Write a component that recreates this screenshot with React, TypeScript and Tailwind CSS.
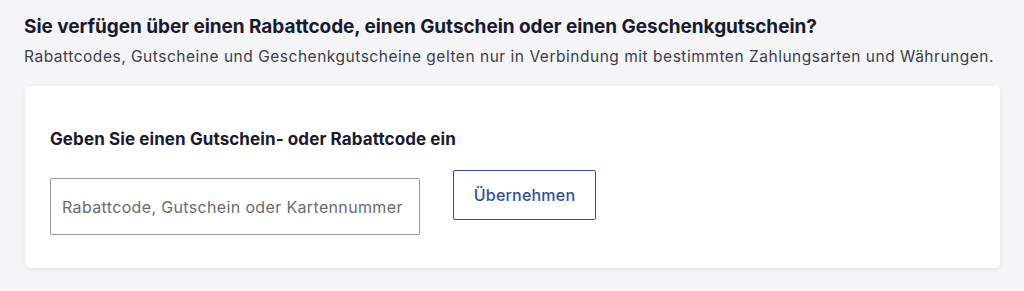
export default function App() {
  return (
    <div className="w-[1024px] h-[291px] bg-[#f5f5f7] px-6 pt-[16px] font-['Inter',sans-serif] overflow-hidden">
      <h1 className="text-[19px] leading-[22px] font-bold text-[#1a1a2e] tracking-[-0.05px]">
        Sie verfügen über einen Rabattcode, einen Gutschein oder einen Geschenkgutschein?
      </h1>
      <p className="mt-[9px] text-[15.5px] leading-[20px] text-[#3c3c4e] tracking-[0.52px]">
        Rabattcodes, Gutscheine und Geschenkgutscheine gelten nur in Verbindung mit bestimmten Zahlungsarten und Währungen.
      </p>
      <div className="mt-[19px] ml-px w-[975px] h-[182px] bg-white rounded-[5px] shadow-[0_1px_4px_rgba(0,0,0,0.08)] px-[25px] pt-[43px]">
        <h2 className="text-[17px] leading-[20px] font-bold text-[#1a1a2e] tracking-[0.1px]">
          Geben Sie einen Gutschein- oder Rabattcode ein
        </h2>
        <div className="flex items-start gap-[33px] mt-[21px]">
          <input
            className="mt-[8px] w-[370px] h-[57px] border border-[#9a9a9a] rounded-[2px] px-[11px] text-[16px] tracking-[0.35px] text-[#1a1a2e] placeholder:text-[#6b6b6b] outline-none"
            placeholder="Rabattcode, Gutschein oder Kartennummer"
          />
          <button className="w-[143px] h-[50px] border border-[#2f4d9f] rounded-[2px] text-[16px] tracking-[0.2px] font-medium text-[#2f4d9f]">
            Übernehmen
          </button>
        </div>
      </div>
    </div>
  );
}
